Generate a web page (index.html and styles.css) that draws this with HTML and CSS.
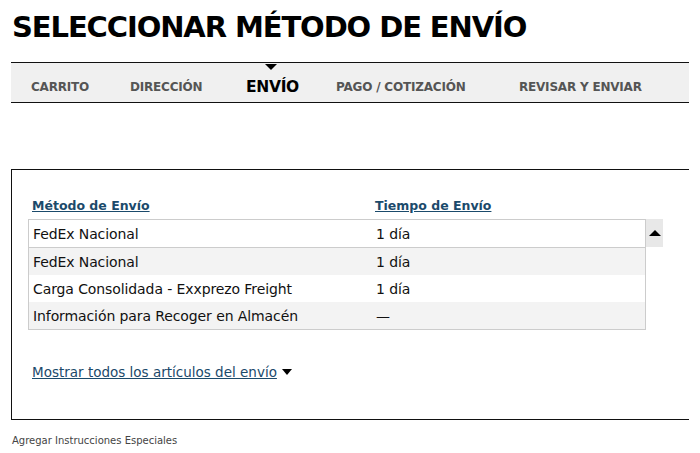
FILE: index.html
```html
<!DOCTYPE html>
<html lang="es">
<head>
<meta charset="utf-8">
<link rel="stylesheet" href="styles.css">
</head>
<body>
<div class="page">
  <h1 class="title">SELECCIONAR MÉTODO DE ENVÍO</h1>
  <nav class="steps">
    <span class="step s1">CARRITO</span>
    <span class="step s2">DIRECCIÓN</span>
    <span class="step s3 active">ENVÍO</span>
    <span class="step s4">PAGO / COTIZACIÓN</span>
    <span class="step s5">REVISAR Y ENVIAR</span>
  </nav>
  <section class="box">
    <div class="heads">
      <a class="head col1" href="#">Método de Envío</a>
      <a class="head col2" href="#">Tiempo de Envío</a>
    </div>
    <div class="tablewrap">
      <div class="table">
        <div class="row first"><span class="col1">FedEx Nacional</span><span class="col2">1 día</span></div>
        <div class="row alt"><span class="col1">FedEx Nacional</span><span class="col2">1 día</span></div>
        <div class="row"><span class="col1">Carga Consolidada - Exxprezo Freight</span><span class="col2">1 día</span></div>
        <div class="row alt"><span class="col1">Información para Recoger en Almacén</span><span class="col2">—</span></div>
      </div>
      <div class="scrollbtn"><span class="uptri"></span></div>
    </div>
    <a class="showall" href="#">Mostrar todos los artículos del envío</a><span class="downtri"></span>
  </section>
  <p class="special">Agregar Instrucciones Especiales</p>
</div>
</body>
</html>
```
FILE: styles.css
```css
* { box-sizing: border-box; }
html, body { margin: 0; padding: 0; background: #fff; }
body { font-family: "DejaVu Sans", sans-serif; color: #111; width: 700px; height: 453px; overflow: hidden; }
.page { padding: 0 0 0 11px; }
.title {
  margin: 0;
  padding: 10px 0 0 1px;
  height: 62px;
  font-size: 29px;
  font-weight: bold;
  letter-spacing: -1.1px;
  color: #000;
  line-height: 34px;
}
.steps {
  display: flex;
  align-items: center;
  width: 678px;
  height: 41px;
  background: #f0f0f0;
  border-top: 1px solid #111;
  border-bottom: 1px solid #111;
  padding: 9px 0 0 20px;
}
.step {
  font-size: 12px;
  font-weight: bold;
  color: #555;
  letter-spacing: -0.2px;
  white-space: nowrap;
}
.s1 { width: 99px; }
.s2 { width: 116px; }
.s3 { width: 90px; }
.s4 { width: 183px; }
.step.active { font-size: 15.5px; color: #000; position: relative; letter-spacing: -0.3px; }
.step.active::before {
  content: "";
  position: absolute;
  left: 19px;
  top: -14px;
  border-left: 6px solid transparent;
  border-right: 6px solid transparent;
  border-top: 6px solid #000;
}
.box {
  margin-top: 66px;
  width: 678px;
  height: 251px;
  border: 1px solid #111;
  border-right: none;
  padding: 28px 0 0 16px;
}
.heads { display: flex; height: 21px; }
.head { color: #1b4a6b; font-weight: bold; font-size: 12.5px; text-decoration: underline; }
.col1 { width: 347px; padding-left: 4px; display: inline-block; }
.tablewrap { display: flex; align-items: flex-start; }
.table { width: 618px; border: 1px solid #ccc; }
.row { display: flex; align-items: center; height: 27px; font-size: 14px; color: #111; letter-spacing: -0.1px; }
.row.first { border-bottom: 1px solid #ccc; height: 28px; }
.row.alt { background: #f3f3f3; }
.scrollbtn {
  width: 17px; height: 28px; background: #e8e8e8;
  display: flex; align-items: center; justify-content: center;
}
.uptri { border-left: 6px solid transparent; border-right: 6px solid transparent; border-bottom: 6px solid #000; }
.showall { display: inline-block; margin: 34px 0 0 4px; font-size: 13.5px; color: #1b4a6b; text-decoration: underline; }
.downtri { display: inline-block; margin-left: 5px; vertical-align: 2px; border-left: 5.5px solid transparent; border-right: 5.5px solid transparent; border-top: 6px solid #000; }
.special { margin: 15px 0 0 1px; font-size: 10px; color: #444; }
```
